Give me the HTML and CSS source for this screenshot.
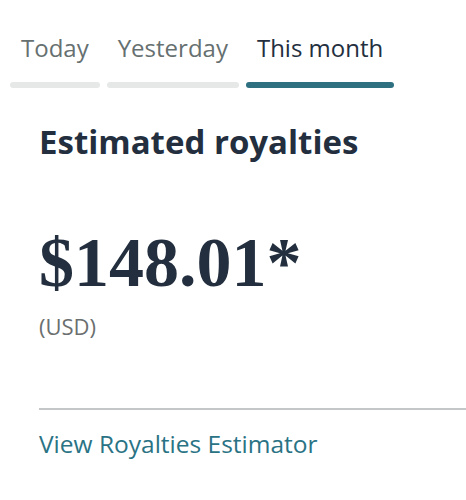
FILE: index.html
```html
<!DOCTYPE html>
<html>
<head>
<meta charset="utf-8">
<link rel="stylesheet" href="styles.css">
</head>
<body>
<div class="tabs">
  <div class="tab"><span class="tab-label">Today</span><span class="tab-bar"></span></div>
  <div class="tab"><span class="tab-label">Yesterday</span><span class="tab-bar"></span></div>
  <div class="tab active"><span class="tab-label">This month</span><span class="tab-bar"></span></div>
</div>
<div class="content">
  <h2 class="title">Estimated royalties</h2>
  <div class="amount">$148.01*</div>
  <div class="currency">(USD)</div>
  <div class="divider"></div>
  <a class="link" href="#">View Royalties Estimator</a>
</div>
</body>
</html>
```
FILE: styles.css
```css
html, body {
  margin: 0;
  padding: 0;
  background: #ffffff;
  font-family: "Open Sans", "Noto Sans", sans-serif;
  color: #232f3e;
}
.tabs {
  display: flex;
  gap: 7px;
  padding: 26px 0 0 10px;
}
.tab {
  display: flex;
  flex-direction: column;
  align-items: stretch;
}
.tab-label {
  font-size: 24px;
  line-height: 44px;
  color: #667070;
  padding: 0 11px;
  text-align: center;
  white-space: nowrap;
}
.tab-bar {
  display: block;
  height: 6px;
  border-radius: 3px;
  background: #e6e8e8;
  margin-top: 12px;
}
.tab.active .tab-label {
  color: #232f3e;
}
.tab.active .tab-bar {
  background: #2e7080;
}
.content {
  padding-left: 39px;
}
.title {
  margin: 0;
  padding-top: 34px;
  font-size: 33px;
  font-weight: 700;
  line-height: 40px;
  color: #232f3e;
}
.amount {
  margin-top: 61px;
  font-family: "Liberation Serif", "Times New Roman", serif;
  font-weight: 700;
  font-size: 70px;
  line-height: 80px;
  color: #232f3e;
}
.currency {
  margin-top: 9px;
  font-size: 22px;
  line-height: 28px;
  color: #6b6f6f;
}
.divider {
  margin-top: 68px;
  height: 2px;
  background: #c4c7c7;
}
.link {
  display: inline-block;
  margin-top: 18px;
  font-size: 24.5px;
  line-height: 32px;
  color: #2a7385;
  text-decoration: none;
}
```
